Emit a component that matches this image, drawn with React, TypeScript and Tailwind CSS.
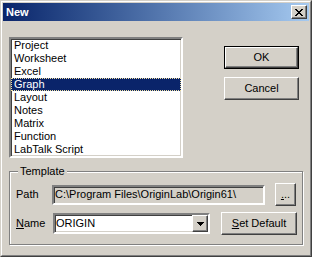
import React from "react"

const items = ["Project", "Worksheet", "Excel", "Graph", "Layout", "Notes", "Matrix", "Function", "LabTalk Script"]

const raised =
  "border border-t-white border-l-white border-r-[#404040] border-b-[#404040] shadow-[inset_-1px_-1px_0_#808080] bg-[#d4d0c8]"
const sunken =
  "border-2 border-t-[#808080] border-l-[#808080] border-r-white border-b-white shadow-[inset_1px_1px_0_#404040,inset_-1px_-1px_0_#d4d0c8]"

function Button({ children, isDefault, className }: { children: React.ReactNode; isDefault?: boolean; className?: string }) {
  const inner = (
    <div className={`${raised} flex items-center justify-center w-full h-full`}>{children}</div>
  )
  return isDefault ? (
    <div className={`border border-black ${className ?? ""}`}>{inner}</div>
  ) : (
    <div className={className}>{inner}</div>
  )
}

export default function App() {
  return (
    <div
      className="w-[312px] h-[257px] bg-[#d4d0c8] text-black text-[11px] leading-[13px] border border-t-[#d4d0c8] border-l-[#d4d0c8] border-r-[#404040] border-b-[#404040]"
      style={{ fontFamily: '"Liberation Sans", Arial, sans-serif' }}
    >
      <div className="h-full border border-t-white border-l-white border-r-[#808080] border-b-[#808080] p-[1px]">
        {/* Title bar */}
        <div className="h-[18px] flex items-center bg-gradient-to-r from-[#0a246a] to-[#a6caf0] pl-[2px] pr-[2px]">
          <span className="font-bold text-white text-[11px] ml-[1px]">New</span>
          <div className={`${raised} ml-auto w-[16px] h-[14px] flex items-center justify-center`}>
            <svg width="8" height="7" viewBox="0 0 8 7" shapeRendering="crispEdges">
              <path d="M0 0h2v1H0zM6 0h2v1H6zM1 1h2v1H1zM5 1h2v1H5zM2 2h4v1H2zM3 3h2v1H3zM2 4h4v1H2zM1 5h2v1H1zM5 5h2v1H5zM0 6h2v1H0zM6 6h2v1H6z" fill="#000" />
            </svg>
          </div>
        </div>

        {/* Body */}
        <div className="pl-[6px] pt-[16px]">
          <div className="flex">
            <div className={`${sunken} bg-white w-[174px] h-[121px] py-0 px-0`}>
              {items.map((it) =>
                it === "Graph" ? (
                  <div
                    key={it}
                    className="h-[13px] bg-[#0a246a] text-white pl-[3px] outline outline-1 outline-dotted outline-[#f0e0a0] -outline-offset-1"
                  >
                    {it}
                  </div>
                ) : (
                  <div key={it} className="h-[13px] pl-[3px]">
                    {it}
                  </div>
                )
              )}
            </div>
            <div className="ml-[41px] mt-[9px] flex flex-col gap-[8px]">
              <Button isDefault className="w-[75px] h-[23px]">OK</Button>
              <Button className="w-[75px] h-[23px]">Cancel</Button>
            </div>
          </div>

          {/* Template group */}
          <div className="relative mt-[13px] w-[294px] h-[74px] border border-[#808080] shadow-[inset_1px_1px_0_#fff,1px_1px_0_#fff] pt-[11px] pl-[6px]">
            <span className="absolute -top-[7px] left-[8px] bg-[#d4d0c8] px-[2px]">Template</span>
            <div className="flex items-center h-[23px]">
              <span className="w-[36px]">Path</span>
              <div className={`${sunken} bg-[#d4d0c8] w-[213px] h-[20px] flex items-center pl-[1px] whitespace-nowrap overflow-hidden`}>
                C:\Program Files\OriginLab\Origin61\
              </div>
              <Button className="ml-[10px] w-[21px] h-[23px]">
                <span className="leading-[8px] pb-[2px]"><u>.</u>..</span>
              </Button>
            </div>
            <div className="flex items-center h-[23px] mt-[6px]">
              <span className="w-[37px]"><u>N</u>ame</span>
              <div className={`${sunken} bg-white w-[157px] h-[21px] flex items-center`}>
                <span className="flex-1 pl-[1px]">ORIGIN</span>
                <div className={`${raised} w-[16px] h-[17px] flex items-center justify-center`}>
                  <svg width="7" height="4" viewBox="0 0 7 4" shapeRendering="crispEdges">
                    <path d="M0 0h7v1H0zM1 1h5v1H1zM2 2h3v1H2zM3 3h1v1H3z" fill="#000" />
                  </svg>
                </div>
              </div>
              <Button className="ml-[11px] w-[76px] h-[23px]">
                <span><u>S</u>et Default</span>
              </Button>
            </div>
          </div>
        </div>
      </div>
    </div>
  )
}
